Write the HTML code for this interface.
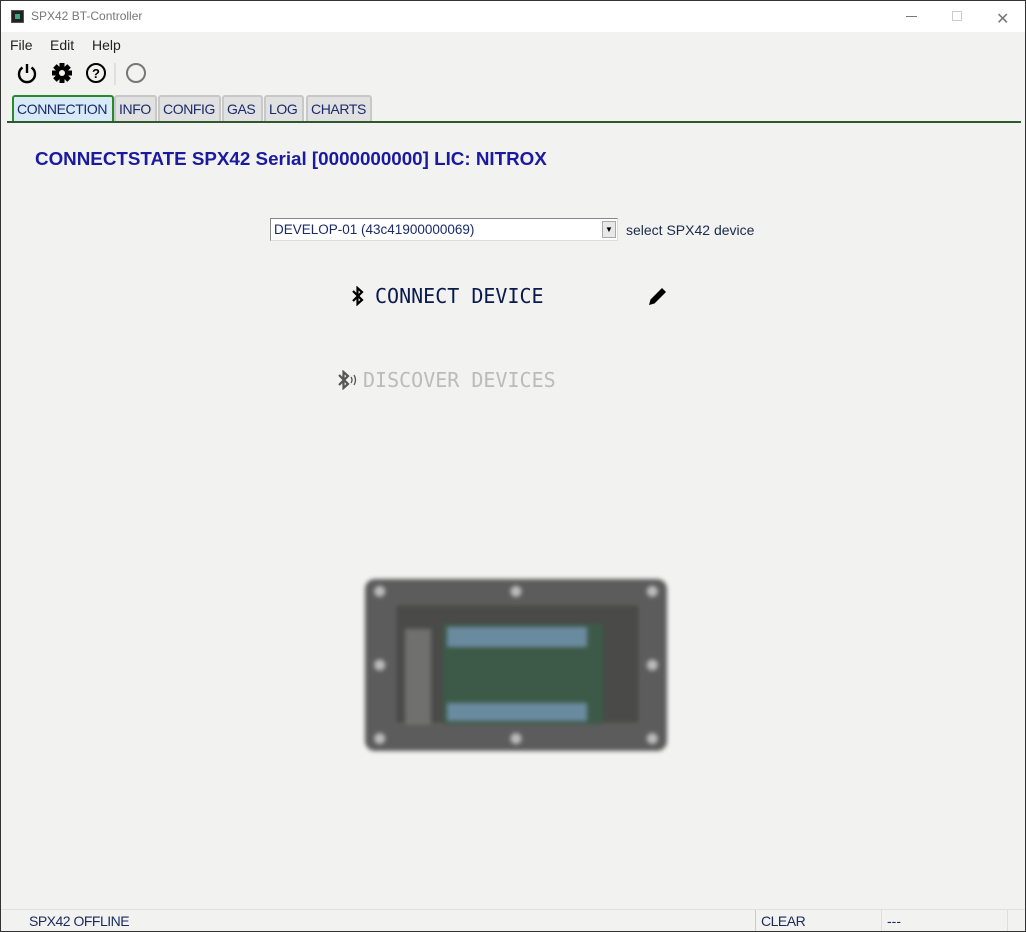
<!DOCTYPE html>
<html><head><style>
*{margin:0;padding:0;box-sizing:border-box}
body{width:1026px;height:932px;background:#f2f2f1;font-family:"Liberation Sans",sans-serif;position:relative;overflow:hidden;border:1px solid #333}
.a{position:absolute}
.tab{position:absolute;top:94px;height:26px;background:#e1e1e1;border:2px solid #c8c8c8;border-bottom:none;border-radius:3px 3px 0 0;font-size:14px;letter-spacing:-0.4px;color:#1a2a6a;padding:4px 0 0 3px;white-space:nowrap;overflow:hidden}
</style></head><body>
<div class="a" style="left:0;top:0;width:1024px;height:31px;background:#fff"></div>
<div class="a" style="left:10px;top:9px;width:13px;height:13px;background:#222;border:1px solid #555"><div style="margin:3px;width:5px;height:5px;background:#3a8"></div></div>
<div class="a" style="left:30px;top:8px;font-size:12px;color:#777">SPX42 BT-Controller</div>
<div class="a" style="left:905px;top:15px;width:11px;height:1px;background:#777"></div>
<div class="a" style="left:951px;top:10px;width:10px;height:10px;border:1px solid #ccc"></div>
<div class="a" style="left:995px;top:8px;font-size:16px;color:#777">✕</div>
<div class="a" style="left:9px;top:36px;font-size:14px;color:#222">File</div>
<div class="a" style="left:49px;top:36px;font-size:14px;color:#222">Edit</div>
<div class="a" style="left:91px;top:36px;font-size:14px;color:#222">Help</div>
<svg class="a" style="left:15px;top:60px" width="140" height="24" viewBox="0 0 140 24">
<path d="M11 3v9" stroke="#000" stroke-width="2.4" fill="none"/><path d="M6.5 6.5a8 8 0 1 0 9 0" stroke="#000" stroke-width="2.4" fill="none"/>
<g transform="translate(46,12)"><circle r="6.5" fill="#000"/><g fill="#000"><rect x="-2.5" y="-10" width="5" height="20"/><rect x="-2.5" y="-10" width="5" height="20" transform="rotate(45)"/><rect x="-2.5" y="-10" width="5" height="20" transform="rotate(90)"/><rect x="-2.5" y="-10" width="5" height="20" transform="rotate(135)"/></g><circle r="3" fill="#f2f2f1"/></g>
<circle cx="80" cy="12" r="9" stroke="#000" stroke-width="2" fill="none"/><text x="80" y="17" text-anchor="middle" font-size="13" font-weight="bold" font-family="Liberation Sans">?</text>
<line x1="99" y1="2" x2="99" y2="24" stroke="#ccc"/>
<circle cx="120" cy="12" r="9" stroke="#777" stroke-width="2" fill="none"/>
</svg>
<div class="tab" style="left:11px;width:102px;background:#d8eaf8;border-color:#2a8a2a">CONNECTION</div>
<div class="tab" style="left:113px;width:43px">INFO</div>
<div class="tab" style="left:157px;width:63px">CONFIG</div>
<div class="tab" style="left:221px;width:41px">GAS</div>
<div class="tab" style="left:263px;width:40px">LOG</div>
<div class="tab" style="left:305px;width:66px">CHARTS</div>
<div class="a" style="left:6px;top:120px;width:1014px;height:2px;background:#2d5a2d"></div>
<div class="a" style="left:34px;top:147px;font-size:18.8px;font-weight:bold;color:#1a1aa0">CONNECTSTATE SPX42 Serial [0000000000] LIC: NITROX</div>
<div class="a" style="left:269px;top:217px;width:348px;height:23px;background:#fff;border:1px solid #888;border-right-color:#ddd;border-bottom-color:#ddd;font-size:13.5px;color:#1a2a6a;padding:3px 3px">DEVELOP-01 (43c41900000069)</div>
<div class="a" style="left:601px;top:220px;width:14px;height:17px;background:#e8e8e8;border:1px solid #aaa;font-size:8px;text-align:center;line-height:16px">▼</div>
<div class="a" style="left:625px;top:221px;font-size:14px;color:#1a2a4a">select SPX42 device</div>
<svg class="a" style="left:349px;top:285px" width="16" height="20" viewBox="0 0 16 20"><path d="M3 5l9 9-4.5 4V2L12 6 3 15" stroke="#000" stroke-width="2.2" fill="none"/></svg>
<div class="a" style="left:374px;top:283px;font-family:'DejaVu Sans Mono','Liberation Mono',monospace;font-size:20px;color:#0a1a4a">CONNECT DEVICE</div>
<svg class="a" style="left:646px;top:284px" width="22" height="22" viewBox="0 0 22 22"><path d="M2 20l1.5-5.5L15 3l4 4L7.5 18.5z" fill="#000"/></svg>
<svg class="a" style="left:335px;top:369px" width="22" height="20" viewBox="0 0 22 20"><path d="M3 5l9 9-4.5 4V2L12 6 3 15" stroke="#555" stroke-width="2.2" fill="none"/><path d="M15 7q2 3 0 6M18 5q3 5 0 10" stroke="#555" stroke-width="1.3" fill="none"/></svg>
<div class="a" style="left:362px;top:367px;font-family:'DejaVu Sans Mono','Liberation Mono',monospace;font-size:20px;color:#bbb">DISCOVER DEVICES</div>
<div class="a" style="left:364px;top:578px;width:302px;height:172px;background:#5c5c5c;border-radius:10px;filter:blur(2px)">
<div class="a" style="left:30px;top:25px;width:245px;height:120px;background:#4a4a48;border:1px solid #666"></div>
<div class="a" style="left:78px;top:45px;width:160px;height:100px;background:#3d5a48"></div>
<div class="a" style="left:82px;top:48px;width:140px;height:20px;background:#6a8aa0"></div>
<div class="a" style="left:82px;top:124px;width:140px;height:18px;background:#6a8aa0"></div>
<div class="a" style="left:40px;top:50px;width:26px;height:95px;background:#8a8a8a;opacity:.6"></div>
<div class="a" style="left:6px;top:6px;width:290px;height:160px;background:radial-gradient(circle at 3% 4%,#bbb 5px,transparent 6px),radial-gradient(circle at 97% 4%,#bbb 5px,transparent 6px),radial-gradient(circle at 3% 96%,#bbb 5px,transparent 6px),radial-gradient(circle at 97% 96%,#bbb 5px,transparent 6px),radial-gradient(circle at 3% 50%,#bbb 5px,transparent 6px),radial-gradient(circle at 97% 50%,#bbb 5px,transparent 6px),radial-gradient(circle at 50% 4%,#bbb 5px,transparent 6px),radial-gradient(circle at 50% 96%,#bbb 5px,transparent 6px)"></div>
</div>
<div class="a" style="left:0;top:908px;width:1024px;height:1px;background:#e0e0e0"></div>
<div class="a" style="left:28px;top:912px;font-size:14px;letter-spacing:-0.5px;color:#1a2a5a">SPX42 OFFLINE</div>
<div class="a" style="left:754px;top:909px;width:1px;height:21px;background:#ccc"></div>
<div class="a" style="left:760px;top:912px;font-size:14px;letter-spacing:-0.5px;color:#1a2a5a">CLEAR</div>
<div class="a" style="left:880px;top:909px;width:1px;height:21px;background:#ddd"></div>
<div class="a" style="left:886px;top:912px;font-size:14px;color:#1a2a5a">---</div>
<div class="a" style="left:1006px;top:909px;width:1px;height:21px;background:#ddd"></div>
</body></html>
